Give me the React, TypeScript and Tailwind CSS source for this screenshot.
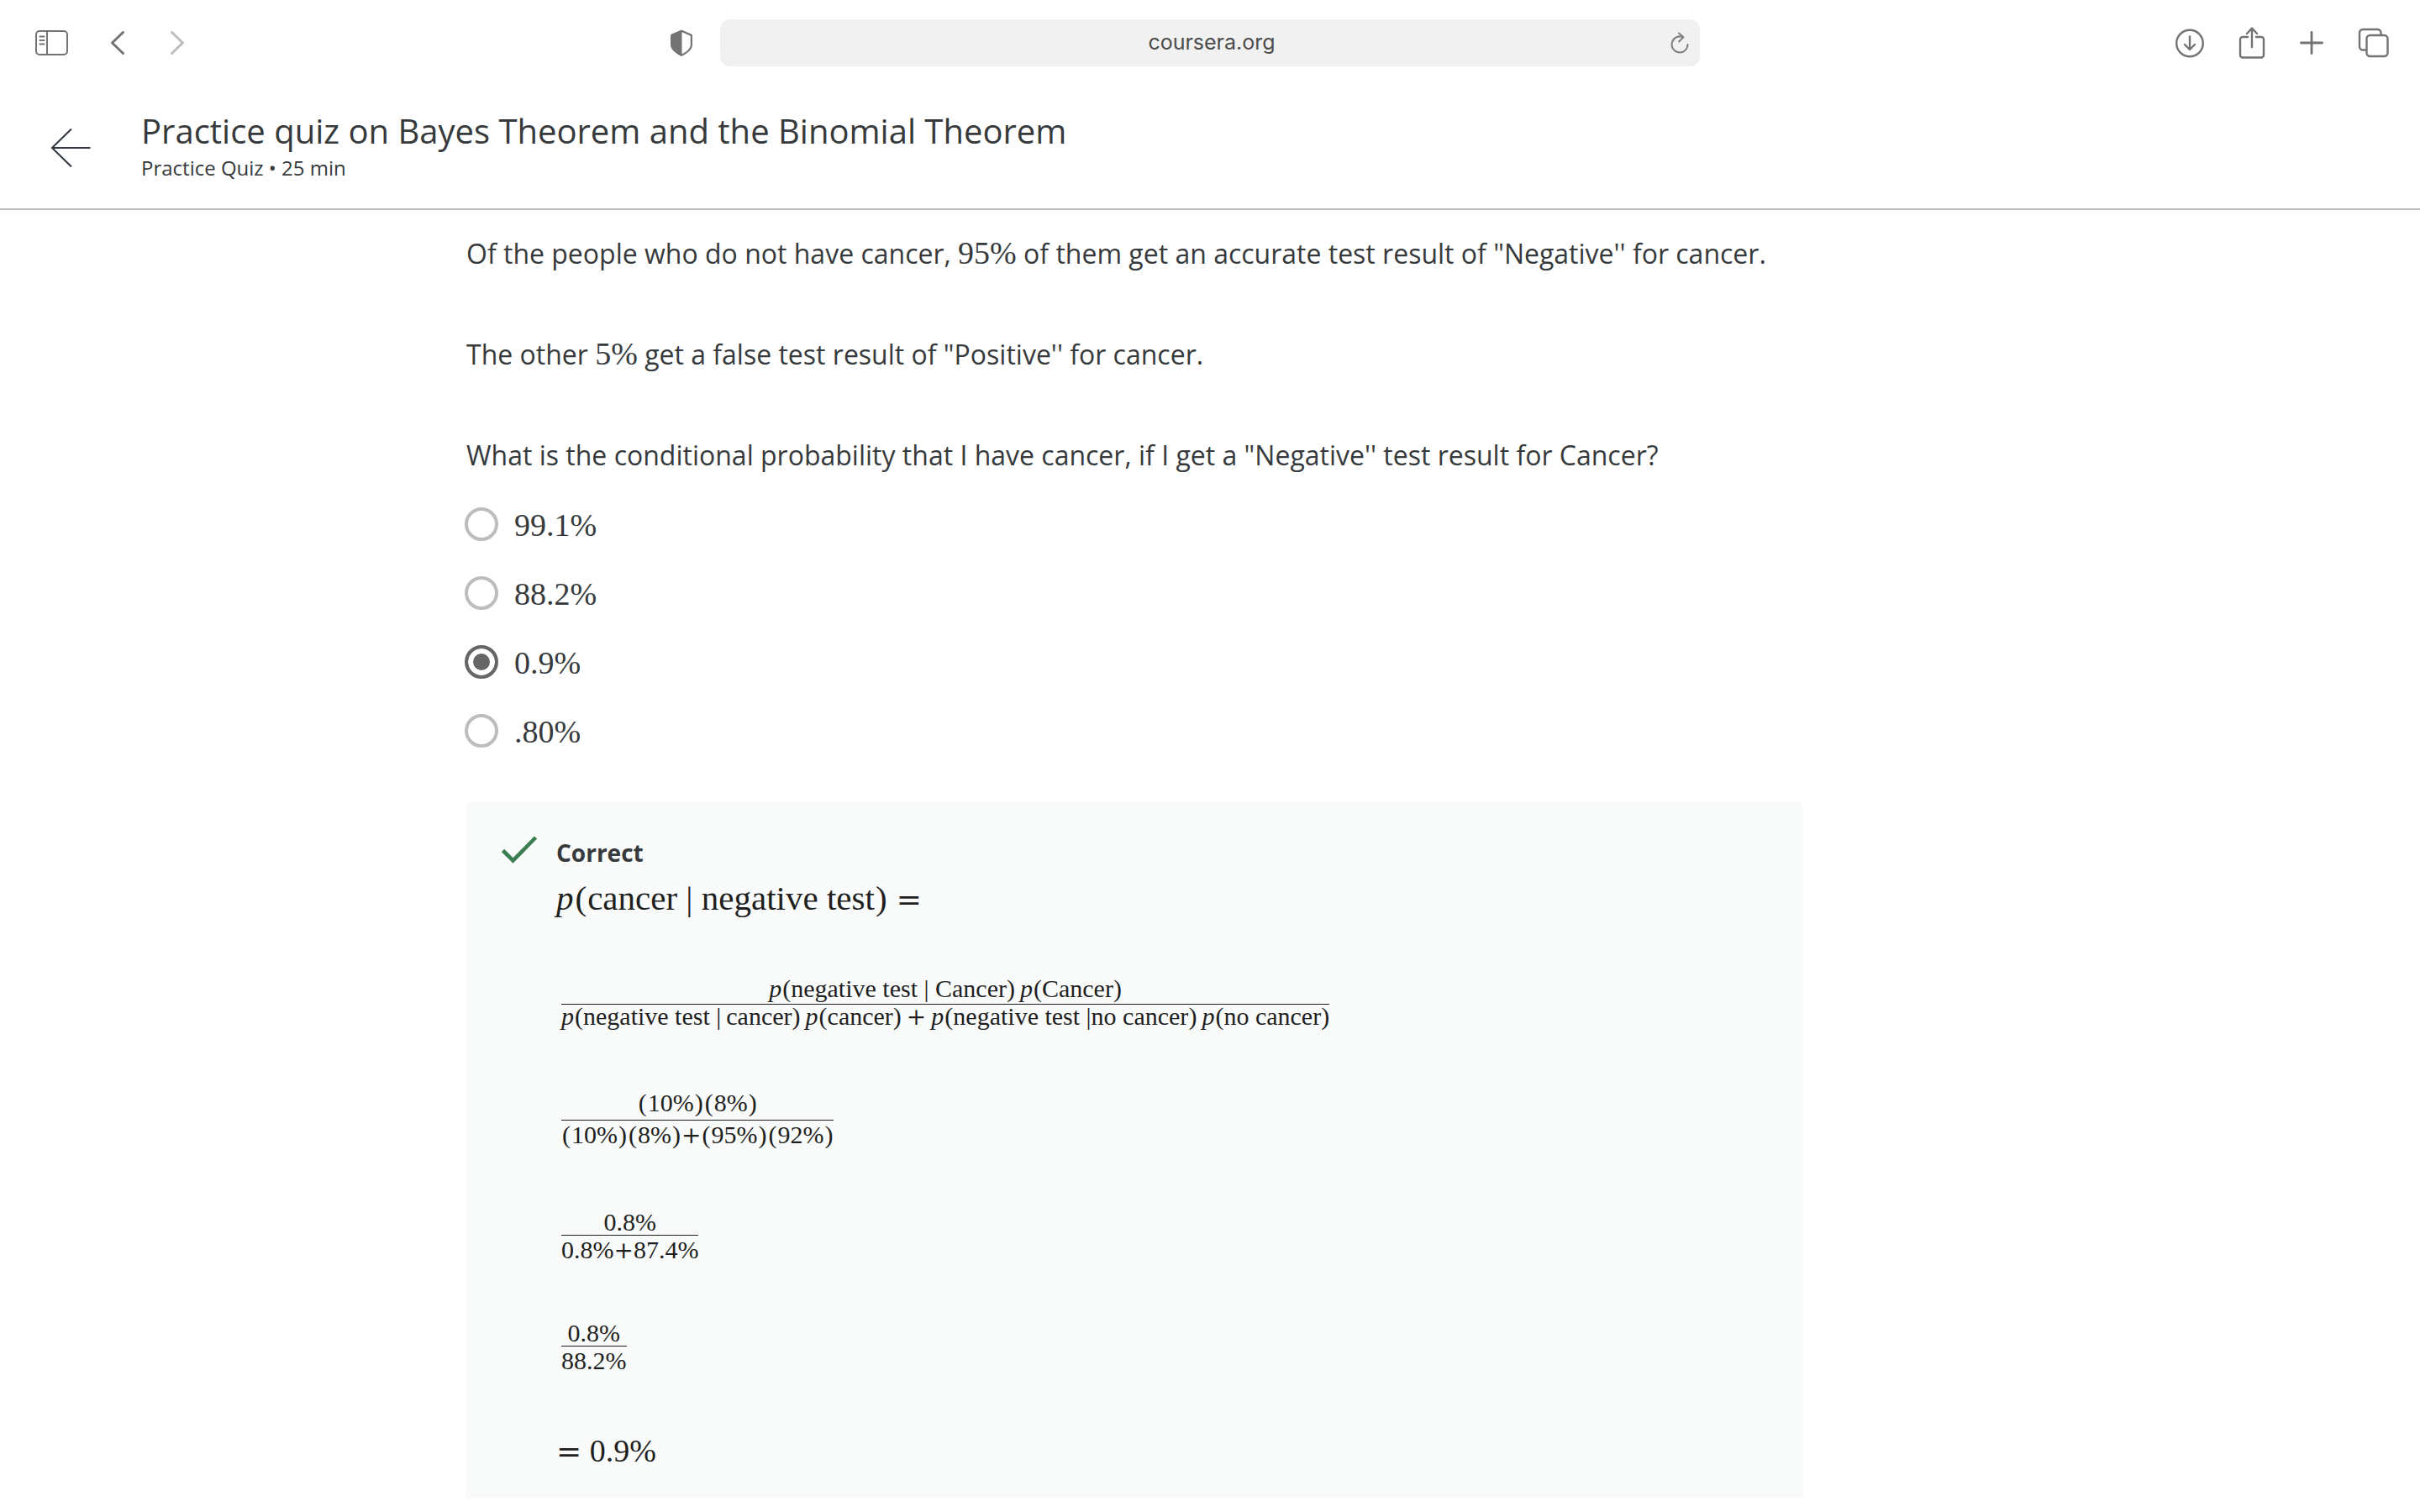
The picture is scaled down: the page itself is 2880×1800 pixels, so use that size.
import React, { useState } from "react";

/*
 * Splits a formula into tokens: the function name p is italic, signs use a wider face,
 * and parentheses get a little air in formulas made of numbers.
 */
function Tex({ children, tight = false, small = false }: { children: string; tight?: boolean; small?: boolean }) {
  const tokens = children.split(/(\bp(?=\()|[()+=])/).filter((t) => t !== "");
  return (
    <>
      {tokens.map((t, i) => {
        if (t === "p")
          return (
            <i key={i} className="mr-px">
              {t}
            </i>
          );
        if (t === "(" || t === ")")
          return (
            <span key={i} className={tight ? "" : "px-px"}>
              {t}
            </span>
          );
        if (t === "+" || t === "=")
          return (
            <span key={i} className={`font-['DejaVu_Serif',serif] leading-none ${small ? "text-[28px]" : "text-[36px]"}`}>
              {t}
            </span>
          );
        return <span key={i}>{t}</span>;
      })}
    </>
  );
}

function Fraction({ top, bottom, className, topClass, bottomClass, tight }: { top: string; bottom: string; className: string; topClass: string; bottomClass: string; tight?: boolean }) {
  return (
    <div className={`ml-1.5 flex w-fit flex-col text-center text-[30px] leading-7 whitespace-pre ${className}`}>
      <div className={topClass}>
        <Tex small tight={tight}>
          {top}
        </Tex>
      </div>
      <div className={`border-t border-[#1f1f1f] ${bottomClass}`}>
        <Tex small tight={tight}>
          {bottom}
        </Tex>
      </div>
    </div>
  );
}

function Num({ children }: { children: string }) {
  return <span className="font-['Liberation_Serif',serif] text-[38px] leading-none">{children}</span>;
}

const options = ["99.1%", "88.2%", "0.9%", ".80%"];

export default function App() {
  const [answer, setAnswer] = useState("0.9%");
  return (
    <div className="min-h-screen bg-white font-['Open_Sans',sans-serif] text-[#373a3c]">
      <nav className="grid h-[104px] grid-cols-[1fr_40.5%_1fr] items-center pb-0.5 text-[#737373]">
        <div className="flex items-center pr-8 pl-[42px]">
          <button aria-label="Sidebar">
            <svg width="39" height="30" viewBox="0 0 39 30" fill="none" stroke="currentColor" strokeWidth="2">
              <rect x="1" y="1" width="37" height="28" rx="4" />
              <path d="M14 1v28M5.500 7.500h5M5.500 12h5M5.500 16.500h5" strokeLinecap="round" />
            </svg>
          </button>
          <button aria-label="Back" className="ml-[50px]">
            <svg width="18" height="30" viewBox="0 0 18 30" fill="none" stroke="currentColor" strokeWidth="3" strokeLinecap="round" strokeLinejoin="round">
              <path d="M15.500 2.500L2.500 15l13 12.500" />
            </svg>
          </button>
          <button aria-label="Forward" className="ml-[53px] text-[#bdbdbd]">
            <svg width="18" height="30" viewBox="0 0 18 30" fill="none" stroke="currentColor" strokeWidth="3" strokeLinecap="round" strokeLinejoin="round">
              <path d="M2.500 2.500L15.500 15l-13 12.500" />
            </svg>
          </button>
          <button aria-label="Privacy report" className="ml-auto">
            <svg width="28" height="34" viewBox="0 0 28 34">
              <path d="M14 1.500L25.500 6.500C26.500 7 27 7.400 27 8.500V19C27 25 21 29.500 14 33C7 29.500 1 25 1 19V8.500C1 7.400 1.500 7 2.500 6.500Z" fill="currentColor" />
              <path d="M14.500 4.200L23.800 8.300C24.500 8.600 24.800 8.900 24.800 9.600V19C24.800 23.500 20.500 27.300 14.500 30.500Z" fill="#fff" />
            </svg>
          </button>
        </div>
        <div className="flex h-14 items-center rounded-xl bg-[#f1f1f1]">
          <input
            aria-label="Address"
            defaultValue="coursera.org"
            className="min-w-0 flex-1 bg-transparent pl-10 text-center font-[Inter,sans-serif] text-[25px] text-[#4c4c4c] outline-none"
          />
          <button aria-label="Reload" className="mr-3 text-[#808080]">
            <svg width="24" height="28" viewBox="0 0 24 28" fill="none" stroke="currentColor" strokeWidth="2" strokeLinecap="round" strokeLinejoin="round">
              <path d="M16 7.300A9.500 9.500 0 1 0 21.500 16" />
              <path d="M11 2.500l5.500 4.800L11 12.500" />
            </svg>
          </button>
        </div>
        <div className="flex items-center justify-end gap-10 pr-9">
          <button aria-label="Downloads">
            <svg width="36" height="36" viewBox="0 0 36 36" fill="none" stroke="currentColor" strokeWidth="2.400" strokeLinecap="round" strokeLinejoin="round">
              <circle cx="18" cy="18.500" r="15.800" />
              <path d="M18 10.500v15.500M12 20l6 6 6-6" />
            </svg>
          </button>
          <button aria-label="Share">
            <svg width="32" height="40" viewBox="0 0 32 40" fill="none" stroke="currentColor" strokeWidth="2.400" strokeLinecap="round" strokeLinejoin="round">
              <path d="M11 13H5a3 3 0 0 0-3 3V34.500a3 3 0 0 0 3 3H27a3 3 0 0 0 3-3V16a3 3 0 0 0-3-3H21M16 25V3M10 9l6-6.500L22 9" />
            </svg>
          </button>
          <button aria-label="New tab">
            <svg width="30" height="30" viewBox="0 0 30 30" fill="none" stroke="currentColor" strokeWidth="2.800" strokeLinecap="round">
              <path d="M15 2.500v25M2.500 15h25" />
            </svg>
          </button>
          <button aria-label="Tab overview">
            <svg width="38" height="36" viewBox="0 0 38 36" fill="none" stroke="currentColor" strokeWidth="2.400" strokeLinejoin="round">
              <rect x="10.500" y="9" width="25" height="25" rx="4" />
              <path d="M10.500 26.500H6a4 4 0 0 1-4-4V6a4 4 0 0 1 4-4H23.500a4 4 0 0 1 4 4V9" />
            </svg>
          </button>
        </div>
      </nav>

      <header className="flex h-[146px] items-center border-b-2 border-[#bdbdbd] pl-[60px]">
        <button aria-label="Go back" className="text-[#2f3542]">
          <svg width="48" height="48" viewBox="0 0 48 48" fill="none" stroke="currentColor" strokeWidth="2">
            <path d="M47.500 24H2M25 1.500L2 24l23 22.500" />
          </svg>
        </button>
        <div className="ml-[60px] pb-1">
          <h1 className="text-[40px] leading-12">Practice quiz on Bayes Theorem and the Binomial Theorem</h1>
          <p className="mt-1 text-2xl leading-8">Practice Quiz • 25 min</p>
        </div>
      </header>

      <main className="pt-[22px] pr-[180px]">
        <div className="mx-auto w-full max-w-[1590px]">
          <div className="flex flex-col gap-[60px] text-[32px] leading-[60px]">
            <p>
              Of the people who do not have cancer, <Num>95%</Num> of them get an accurate test result of "Negative'' for cancer.
            </p>
            <p>
              The other <Num>5%</Num> get a false test result of "Positive'' for cancer.
            </p>
            <p>What is the conditional probability that I have cancer, if I get a "Negative'' test result for Cancer?</p>
          </div>

          <div role="radiogroup" aria-label="Answer" className="mt-[11px] -ml-0.5">
            {options.map((o) => (
              <label key={o} className="flex h-[82px] items-center gap-[19px]">
                <input
                  type="radio"
                  name="answer"
                  checked={answer === o}
                  onChange={() => setAnswer(o)}
                  className="size-10 appearance-none rounded-full border-4 border-[#bdbdbd] bg-white checked:border-[#666] checked:bg-[#666] checked:shadow-[inset_0_0_0_6px_white]"
                />
                <span className="pt-0.5 font-['Liberation_Serif',serif] text-[38px] leading-10">{o}</span>
              </label>
            ))}
          </div>

          <section className="mt-11 flex bg-[#f9fbfa] pt-10 pr-10 pb-9 pl-10">
            <svg className="shrink-0" width="46" height="34" viewBox="0 0 46 34" fill="none" stroke="#3a7d50" strokeWidth="4.600">
              <path d="M3.500 17.500L15.500 29.500L42.500 2" />
            </svg>
            <div className="ml-[21px] font-['Liberation_Serif',serif] text-[#1f1f1f]">
              <h2 className="font-['Open_Sans',sans-serif] text-[28px] leading-10 font-bold text-[#373a3c]">Correct</h2>
              <p className="text-[41px] leading-[68px] whitespace-pre">
                <Tex>{"p(cancer | negative test) ="}</Tex>
              </p>
              <Fraction
                tight
                className="mt-[60px]"
                topClass="pb-1"
                bottomClass=""
                top={"p(negative test | Cancer)\u2009p(Cancer)"}
                bottom={"p(negative test |\u2009cancer)\u2009p(cancer)\u2009+\u2009p(negative test |no cancer)\u2009p(no cancer)"}
              />
              <Fraction className="mt-[74px]" topClass="pb-[6px]" bottomClass="pt-[3px]" top="(10%)(8%)" bottom="(10%)(8%)+(95%)(92%)" />
              <Fraction className="mt-[75px]" topClass="pb-px" bottomClass="pt-[3px]" top="0.8%" bottom="0.8%+87.4%" />
              <Fraction className="mt-[70px]" topClass="pb-px" bottomClass="pt-[3px]" top="0.8%" bottom="88.2%" />
              <p className="mt-[73px] text-[38px] leading-10 whitespace-pre">
                <Tex>= 0.9%</Tex>
              </p>
            </div>
          </section>
        </div>
      </main>
    </div>
  );
}
